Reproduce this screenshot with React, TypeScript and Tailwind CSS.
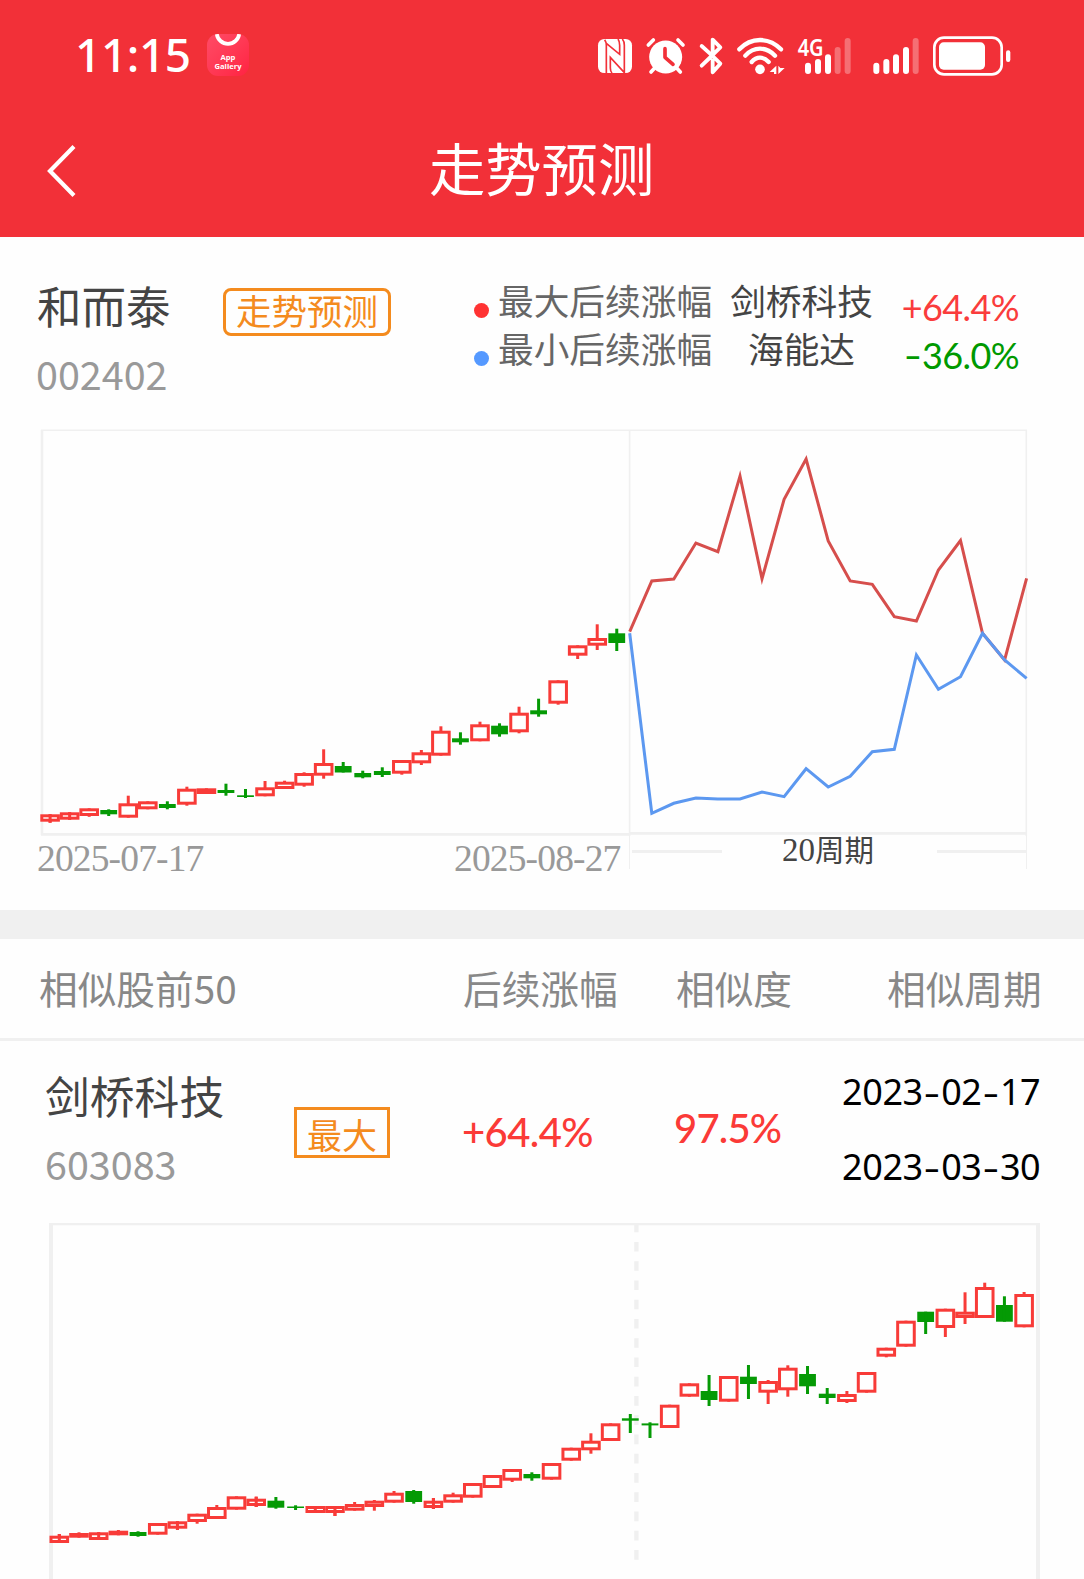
import type { ReactNode } from "react"

type Candle = {
  up: boolean
  high: number
  top: number
  bottom: number
  low: number
  cross?: boolean
}

const RED = "#f83b38"
const GREEN = "#059a05"
const LINE = "#f0f0f0"

const up = (high: number, top: number, bottom: number, low: number, cross = false): Candle => ({
  up: true,
  high,
  top,
  bottom,
  low,
  cross,
})

const down = (high: number, top: number, bottom: number, low: number): Candle => ({
  up: false,
  high,
  top,
  bottom,
  low,
})

const mainCandles: Candle[] = [
  up(814.3, 814.3, 821.7, 822.7, true),
  up(812.3, 812.3, 819.7, 819.7, true),
  up(808.3, 808.3, 816, 816.8),
  down(809.3, 810, 814.3, 816),
  up(795.7, 803.3, 817.7, 817.7),
  up(801.3, 801.3, 809.3, 809.3),
  down(801.3, 804, 808, 809.3),
  up(786.7, 788.7, 804.7, 805.7),
  up(788.3, 788.3, 794, 794),
  down(783.7, 790, 793, 795.7),
  down(789, 795.3, 797, 798),
  up(781, 787.3, 796.3, 796.3),
  up(780.7, 781.7, 789, 789),
  up(772.3, 773, 785.7, 786.7),
  up(749.3, 763, 775.7, 778.7),
  down(762, 766, 772.5, 772.5),
  down(770.7, 773, 777.3, 778.3),
  down(767.3, 771, 775, 777),
  up(760, 760, 773.7, 774.7),
  up(750, 752.3, 763.3, 765),
  up(726.3, 730.7, 755.7, 755.7),
  down(732.3, 738.3, 742.3, 744.7),
  up(721.7, 724.3, 741.3, 741.3),
  down(723.3, 725.7, 734.3, 736.7),
  up(706.7, 712.7, 732.3, 733.3),
  down(698.7, 710.3, 714.3, 716.7),
  up(680.3, 680.3, 703.7, 704.7),
  up(645.3, 645.3, 655.7, 659),
  up(624.3, 638, 645.7, 650),
  down(628.7, 633.3, 643, 651),
]

const similarCandles: Candle[] = [
  up(1534, 1535.7, 1543, 1543, true),
  up(1532.3, 1533, 1537.7, 1537.7),
  up(1532.3, 1532.3, 1540, 1540, true),
  up(1530, 1530.7, 1535.3, 1535.3),
  down(1531.3, 1532, 1536, 1536.7),
  up(1523, 1523, 1534.7, 1534.7),
  up(1521.3, 1521.3, 1528.7, 1530, true),
  up(1513.7, 1513.7, 1522, 1523.7),
  up(1505, 1507, 1519, 1519),
  up(1496.3, 1496.3, 1509.7, 1509.7),
  up(1496.7, 1498.7, 1506, 1507, true),
  down(1497, 1500.7, 1507.7, 1508.7),
  down(1505.3, 1506.5, 1508, 1510),
  up(1506, 1506, 1513, 1513, true),
  up(1506, 1506, 1513, 1516, true),
  up(1502, 1504, 1510.7, 1510.7),
  up(1500, 1500.7, 1507, 1510.7),
  up(1491, 1492.7, 1502.7, 1502.7),
  down(1490, 1491, 1502, 1503.7),
  up(1498, 1500.7, 1508, 1509, true),
  up(1492.7, 1494.3, 1502.7, 1502.7),
  up(1483, 1483, 1497.7, 1497.7),
  up(1475, 1475, 1488, 1488),
  up(1469, 1469, 1480.7, 1482),
  down(1472.3, 1474, 1478.3, 1480.7),
  up(1463, 1463, 1479.7, 1479.7),
  up(1447.7, 1447.7, 1460.7, 1460.7),
  up(1433.3, 1440.7, 1450.3, 1453.7),
  up(1423.3, 1423.3, 1441, 1441),
  down(1414, 1418.3, 1420.7, 1433),
  down(1422.3, 1423.4, 1425.4, 1438),
  up(1404.7, 1404.7, 1428, 1428),
  up(1383.3, 1383.3, 1396.7, 1396.7),
  down(1375, 1391, 1400, 1406),
  up(1376, 1376, 1401.7, 1401.7),
  down(1365, 1376.7, 1384, 1399),
  up(1380, 1381, 1392.7, 1404),
  up(1365.3, 1367.7, 1390.3, 1396.7),
  down(1366, 1374, 1386.3, 1394),
  down(1388, 1393.7, 1398, 1404),
  up(1391, 1394, 1402, 1403),
  up(1372, 1372, 1392.7, 1392.7),
  up(1347.7, 1347.7, 1356.7, 1357.3),
  up(1320.7, 1320.7, 1346.7, 1346.7),
  down(1311.7, 1311.7, 1322, 1334),
  up(1308.7, 1308.7, 1328, 1337),
  up(1292.3, 1311.7, 1318, 1324),
  up(1282.7, 1287, 1318, 1318),
  down(1296.3, 1305, 1321.7, 1321.7),
  up(1292, 1294, 1327.3, 1327.3),
]

const maxLine = [
  631.7, 581, 579, 543, 551.7, 476, 578.8, 499.3, 459, 541, 581, 584.3, 616.7, 621, 570, 540.5,
  633.3, 660, 578.3,
]

const minLine = [
  633.3, 813.3, 803.3, 798, 799, 799, 792, 796.7, 768.7, 787, 776.3, 751.7, 749.3, 655, 689.3,
  676.7, 633.3, 660, 678.3,
]

const toPoints = (values: number[]) =>
  values.map((y, i) => `${(629.7 + i * 22.05).toFixed(1)},${y}`).join(" ")

function Candles({ data, start, step }: { data: Candle[]; start: number; step: number }) {
  return (
    <g>
      {data.map((c, i) => {
        const x = start + i * step
        if (!c.up) {
          return (
            <g key={i} fill={GREEN}>
              <rect x={x - 8.4} y={c.top} width={16.8} height={c.bottom - c.top} />
              <rect x={x - 1.5} y={c.high} width={3} height={c.low - c.high} />
            </g>
          )
        }
        return (
          <g key={i} fill={RED}>
            <rect x={x - 1.5} y={c.high} width={3} height={c.low - c.high} />
            <rect
              x={x - 8.3}
              y={c.top + 1.5}
              width={16.6}
              height={Math.max(c.bottom - c.top - 3, 1)}
              fill="#fff"
              stroke={RED}
              strokeWidth={3}
            />
            {c.cross && <rect x={x - 1.5} y={c.high} width={3} height={c.low - c.high} />}
          </g>
        )
      })}
    </g>
  )
}

// numbers whose minus / date separators are as wide as a digit
function WideDash({ text }: { text: string }) {
  return (
    <>
      {text.split(/(-)/).map((part, i) =>
        part === "-" ? (
          <span key={i} className="inline-block w-[0.51em] text-center">
            <span className="inline-block scale-x-140">-</span>
          </span>
        ) : (
          part
        ),
      )}
    </>
  )
}

function StatusIcon({ x, width, children }: { x: number; width: number; children: ReactNode }) {
  return (
    <svg
      viewBox={`${x} 45 ${width} 126`}
      width={width / 3}
      height={42}
      className="block shrink-0 overflow-visible"
    >
      {children}
    </svg>
  )
}

function StatusBar() {
  return (
    <div className="flex h-[111px] items-start pt-[34px]">
      <span className="-mt-px ml-[75px] w-[132px] font-['Noto_Sans'] text-[46px] leading-[42px] font-medium tracking-[-0.4px] whitespace-nowrap">
        11:15
      </span>
      <div className="relative h-[42px] w-[42px] overflow-hidden rounded-[11px] bg-linear-to-br from-[#ff4a66] to-[#ff2142]">
        <svg viewBox="0 0 42 42" className="absolute inset-0 h-full w-full">
          <path d="M9.8 0a11.3 11.3 0 0 0 22.4 0" fill="none" stroke="#fff" strokeWidth="3.8" />
        </svg>
        <p className="pt-[19px] text-center font-['Open_Sans'] text-[7.6px] leading-[9px] font-bold">
          App
          <br />
          Gallery
        </p>
      </div>
      <div className="ml-[348px] flex pt-px">
        {/* NFC */}
        <StatusIcon x={51} width={108}>
          <rect x="54" y="57" width="102" height="102" rx="19" fill="#fff" />
          <path
            d="M74 59Q79 66 79 76V159M79 70L119 103V76Q119 64 114 57M127 57Q133 64 133 76V158L91 112V144Q91 154 96 159"
            fill="none"
            stroke="#f23038"
            strokeWidth="5"
          />
        </StatusIcon>
        <div className="w-[13px]" />
        {/* alarm */}
        <StatusIcon x={198} width={120}>
          <circle cx="257" cy="111" r="49.5" fill="#fff" />
          <path
            d="M205 75L220 60M309 75L294 60M224 144L213 156M290 144L301 156"
            stroke="#fff"
            strokeWidth="11"
            strokeLinecap="round"
          />
          <path
            d="M255 86V112L279 133"
            fill="none"
            stroke="#f23038"
            strokeWidth="11"
            strokeLinecap="round"
            strokeLinejoin="round"
          />
        </StatusIcon>
        <div className="w-[13px]" />
        {/* bluetooth */}
        <StatusIcon x={357} width={72}>
          <path
            d="M365 78L396 106M365 137L421 82L398 59V94M365 137L400 104M398 108L421 131L398 157V121"
            fill="none"
            stroke="#fff"
            strokeWidth="11.5"
            strokeLinecap="round"
            strokeLinejoin="round"
          />
        </StatusIcon>
        <div className="w-[13px]" />
        {/* wifi */}
        <StatusIcon x={468} width={150}>
          <path
            d="M478 88Q504 60 540 60Q576 60 603 88M496 107Q515 86 540 86Q565 86 585 107M515 126Q526 113 540 113Q554 113 566 126"
            fill="none"
            stroke="#fff"
            strokeWidth="13"
            strokeLinecap="round"
          />
          <circle cx="540" cy="148" r="14.5" fill="#fff" />
          <path d="M589 137V162H582V156H569ZM595 162V137L601 144H614Z" fill="#fff" />
        </StatusIcon>
        <div className="w-[11px]" />
        {/* mobile data */}
        <StatusIcon x={651} width={165}>
          <text
            x="653"
            y="107"
            fill="#fff"
            fontFamily="Noto Sans"
            fontWeight="600"
            fontSize="70"
            textLength="78"
            lengthAdjust="spacingAndGlyphs"
          >
            4G
          </text>
          <g stroke="#fff" strokeWidth="18" strokeLinecap="round">
            <path d="M684 137V153M714 126V153M744 112V153" />
            <path d="M773 90V153M803 63V153" opacity=".3" />
          </g>
        </StatusIcon>
        <div className="w-[20px]" />
        {/* second sim */}
        <StatusIcon x={876} width={144}>
          <g stroke="#fff" strokeWidth="18" strokeLinecap="round">
            <path d="M889 137V153M919 126V153M948 112V153M978 90V153" />
            <path d="M1007 63V153" opacity=".3" />
          </g>
        </StatusIcon>
        <div className="w-[12px]" />
        {/* battery */}
        <StatusIcon x={1056} width={240}>
          <rect x="1063" y="53" width="202" height="110" rx="29" fill="none" stroke="#fff" strokeWidth="8" />
          <rect x="1077" y="67" width="138" height="82" rx="14" fill="#fff" />
          <rect x="1278" y="91" width="13" height="35" rx="6.5" fill="#fff" />
        </StatusIcon>
      </div>
    </div>
  )
}

function LegendRow({ dot, label, name, value, color }: Record<string, string>) {
  return (
    <div className="flex h-12 items-start">
      <span className={`mt-[23px] h-[15px] w-[15px] rounded-full ${dot}`} />
      <span className="ml-[9px] w-[214px] text-[35.7px] leading-[40px] whitespace-nowrap text-[#666]">
        {label}
      </span>
      <span className="ml-[18px] w-[143px] text-center text-[35.7px] leading-[40px] whitespace-nowrap">
        {name}
      </span>
      <span
        className={`mt-[7px] w-[146px] text-right font-['Lato'] text-[36px] leading-[40px] tracking-[-0.6px] whitespace-nowrap ${color}`}
      >
        <WideDash text={value} />
      </span>
    </div>
  )
}

export default function App() {
  return (
    <div className="h-[1579px] w-[1084px] overflow-hidden bg-[#fefefe] font-['Noto_Sans_CJK_SC',sans-serif] text-[#444]">
      <header className="h-[237px] bg-[#f23038] text-white">
        <StatusBar />
        <div className="flex h-[112px] items-center">
          <svg viewBox="0 0 32 56" className="ml-[46px] h-14 w-8 translate-y-1" fill="none" stroke="#fff" strokeWidth="4.2">
            <path d="M28 3.5L4 28L28 52.5" />
          </svg>
          <h1 className="ml-[351px] text-[56.3px] leading-[56px] font-normal whitespace-nowrap">走势预测</h1>
        </div>
      </header>

      <section>
        <div className="flex h-[188px] items-start pl-[37px]">
          <div className="w-[186px] pt-[44px]">
            <p className="text-[44.5px] leading-[48px]">和而泰</p>
            <p className="mt-[20px] -ml-px text-[39.5px] leading-[48px] text-[#999]">002402</p>
          </div>
          <div className="mt-[51px] flex h-[48px] w-[168px] justify-center rounded-[8px] border-3 border-[#f48b1e] text-[35.5px] leading-[38px] text-[#f48b1e]">
            走势预测
          </div>
          <div className="ml-[83px] pt-[43px]">
            <LegendRow dot="bg-[#ff3333]" label="最大后续涨幅" name="剑桥科技" value="+64.4%" color="text-[#fa3c3c]" />
            <LegendRow dot="bg-[#5599ff]" label="最小后续涨幅" name="海能达" value="-36.0%" color="text-[#009900]" />
          </div>
        </div>

        <svg viewBox="0 425 1084 411" className="block h-[411px] w-full">
          <g fill="none" stroke={LINE}>
            <path d="M41 430.3H1027" strokeWidth="1.6" />
            <path d="M42 430V835" strokeWidth="2.6" />
            <path d="M41 834.3H630M630 833.3H1027" strokeWidth="2.8" />
            <path d="M629.6 430V836M1026.3 430V836" strokeWidth="1.6" />
          </g>
          <Candles data={mainCandles} start={50.1} step={19.54} />
          <g fill="none" strokeWidth="3">
            <polyline points={toPoints(maxLine)} stroke="#d64e4c" strokeMiterlimit="10" />
            <polyline points={toPoints(minLine)} stroke="#5c98f0" />
          </g>
        </svg>

        <div className="flex h-[74px] items-start font-['Liberation_Serif'] text-[37.5px] leading-[42px] tracking-[-0.85px] text-[#999]">
          <span className="mt-[2px] ml-[37px] w-[417px]">2025-07-17</span>
          <span className="mt-[2px] w-[175px]">2025-08-27</span>
          <div className="flex h-[33px] w-[398px] justify-between border-x-[1.5px] border-[#f0f0f0]">
            <i className="mt-[14px] ml-[2px] h-[3px] w-[90px] bg-[#f0f0f0]" />
            <span className="-ml-[3px] flex tracking-normal whitespace-nowrap text-[#444]">
              <span className="text-[33px] leading-[29px]">20</span>
              <span className="font-['Noto_Sans_CJK_SC'] text-[29.5px] leading-[24px]">周期</span>
            </span>
            <i className="mt-[14px] h-[3px] w-[89px] bg-[#f0f0f0]" />
          </div>
        </div>
      </section>

      <div className="h-[29px] bg-[#f0f0f0]" />

      <section>
        <div className="flex h-[102px] items-center border-b-3 border-[#f0f0f0] pb-[3px] pl-[39px] text-[38.7px] leading-[44px] whitespace-nowrap text-[#888]">
          <span className="w-[424px]">相似股前50</span>
          <span className="w-[213px]">后续涨幅</span>
          <span className="w-[211px]">相似度</span>
          <span>相似周期</span>
        </div>

        <div className="flex h-[182px] items-start pl-[45px]">
          <div className="w-[249px] pt-[30px]">
            <p className="text-[44.8px] leading-[48px]">剑桥科技</p>
            <p className="mt-[20px] text-[39.5px] leading-[48px] text-[#999]">603083</p>
          </div>
          <div className="mt-[66px] flex h-[51px] w-[96px] justify-center border-3 border-[#f48b1e] text-[35px] leading-[47px] text-[#f48b1e]">
            最大
          </div>
          <span className="mt-[67px] ml-[72px] w-[212px] font-['Lato'] text-[40px] leading-[48px] font-medium tracking-[-0.6px] text-[#fb3a37]">
            +64.4%
          </span>
          <span className="mt-[63px] w-[168px] font-['Lato'] text-[40px] leading-[48px] font-medium tracking-[-0.8px] text-[#fb3a37]">
            97.5%
          </span>
          <div className="pt-[27px] font-['Noto_Sans'] text-[36px] leading-[48px] tracking-[-0.4px] whitespace-nowrap text-black">
            <p>
              <WideDash text="2023-02-17" />
            </p>
            <p className="mt-[27px]">
              <WideDash text="2023-03-30" />
            </p>
          </div>
        </div>

        <svg viewBox="0 1223 1084 356" className="block h-[356px] w-full">
          <g fill="none" stroke={LINE}>
            <path d="M49 1224H1040" strokeWidth="2.4" />
            <path d="M51 1223V1579M1038 1223V1579" strokeWidth="4" />
            <path d="M636.4 1222.7V1561" strokeWidth="4.4" strokeDasharray="9.6 9.66" />
          </g>
          <Candles data={similarCandles} start={59.3} step={19.69} />
        </svg>
      </section>
    </div>
  )
}
